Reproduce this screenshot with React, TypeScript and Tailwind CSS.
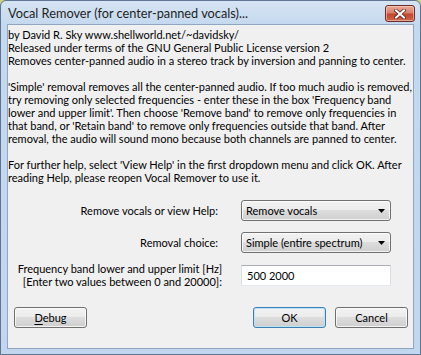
const font = { fontFamily: '"Lato", "Liberation Sans", sans-serif' };

function Combo({ value }: { value: string }) {
  return (
    <div className="flex h-[21px] w-[150px] items-center justify-between rounded-[3px] border border-[#707070] bg-[linear-gradient(#f2f2f2_0%,#ebebeb_50%,#dddddd_50%,#cfcfcf_100%)] pr-[5px] pl-[4px] shadow-[inset_0_0_0_1px_rgba(255,255,255,0.75)]">
      <span className="whitespace-nowrap">{value}</span>
      <svg width="7" height="4" viewBox="0 0 7 4">
        <path d="M0 0h7L3.5 4z" fill="#000" />
      </svg>
    </div>
  );
}

function Button({ children, primary = false }: { children: React.ReactNode; primary?: boolean }) {
  return (
    <div
      className={`flex h-[21px] w-[73px] items-center justify-center rounded-[3px] border bg-[linear-gradient(#f2f2f2_0%,#ebebeb_50%,#dddddd_50%,#cfcfcf_100%)] ${
        primary
          ? "border-[#3c7fb1] shadow-[inset_0_0_0_1px_#b8e3f8]"
          : "border-[#707070] shadow-[inset_0_0_0_1px_rgba(255,255,255,0.75)]"
      }`}
    >
      {children}
    </div>
  );
}

const intro = [
  "by David R. Sky www.shellworld.net/~davidsky/",
  "Released under terms of the GNU General Public License version 2",
  "Removes center-panned audio in a stereo track by inversion and panning to center.",
];

const explain = [
  "'Simple' removal removes all the center-panned audio. If too much audio is removed,",
  "try removing only selected frequencies - enter these in the box 'Frequency band",
  "lower and upper limit'. Then choose 'Remove band' to remove only frequencies in",
  "that band, or 'Retain band' to remove only frequencies outside that band. After",
  "removal, the audio will sound mono because both channels are panned to center.",
];

const help = [
  "For further help, select 'View Help' in the first dropdown menu and click OK. After",
  "reading Help, please reopen Vocal Remover to use it.",
];

export default function App() {
  return (
    <div className="h-[355px] w-[421px] bg-[#cfd27a]" style={font}>
      <div className="flex h-[355px] w-[421px] flex-col rounded-t-[6px] border border-[#5d7593] bg-[linear-gradient(#d6e4f4_0px,#c4d8ee_24px,#c2d7ee_100%)]">
        {/* title bar */}
        <div className="flex h-[23px] items-start justify-between pl-[7px]">
          <span className="mt-[5px] text-[12.75px] leading-[15px] text-[#1e1e1e]">
            Vocal Remover (for center-panned vocals)...
          </span>
          <div className="mt-[4px] mr-[5px] flex h-[17px] w-[30px] items-center justify-center rounded-[3px] border border-[#6b2b24] bg-[linear-gradient(#e9a99a_0%,#d8806c_45%,#c0462c_55%,#d0664a_100%)] shadow-[inset_0_0_0_1px_rgba(255,220,210,0.55)]">
            <svg width="12" height="10" viewBox="0 0 12 10">
              <path d="M2 1.5l8 7M10 1.5l-8 7" stroke="#5a2a22" strokeWidth="3.6" strokeLinecap="square" />
              <path d="M2 1.5l8 7M10 1.5l-8 7" stroke="#ffffff" strokeWidth="2" strokeLinecap="square" />
            </svg>
          </div>
        </div>

        {/* client area */}
        <div className="mx-[6px] h-[325px] border border-[#8ea6c2] bg-[#f0f0f0] text-[11px] leading-[13px] text-black">
          <div className="pt-[3px]">
            {intro.map((l) => (
              <div key={l} className="h-[13px] whitespace-nowrap">{l}</div>
            ))}
            <div className="h-[13px]" />
            {explain.map((l) => (
              <div key={l} className="h-[13px] whitespace-nowrap">{l}</div>
            ))}
            <div className="h-[13px]" />
            {help.map((l) => (
              <div key={l} className="h-[13px] whitespace-nowrap">{l}</div>
            ))}
          </div>

          <div className="mt-[16px] flex items-center">
            <div className="w-[214px] pr-[4px] text-right whitespace-nowrap">Remove vocals or view Help:</div>
            <div className="ml-[19px]">
              <Combo value="Remove vocals" />
            </div>
          </div>

          <div className="mt-[11px] flex items-center">
            <div className="w-[214px] pr-[4px] text-right whitespace-nowrap">Removal choice:</div>
            <div className="ml-[19px]">
              <Combo value="Simple (entire spectrum)" />
            </div>
          </div>

          <div className="mt-[9px] flex items-center">
            <div className="w-[214px] text-right whitespace-nowrap">
              <div>Frequency band lower and upper limit [Hz]</div>
              <div>[Enter two values between 0 and 20000]:</div>
            </div>
            <div className="ml-[19px] flex h-[21px] w-[150px] items-center border border-[#e3e9ef] border-t-[#abadb3] border-l-[#dbdfe6] border-r-[#dbdfe6] bg-white pl-[5px]">
              500 2000
            </div>
          </div>

          <div className="mt-[19px] flex pr-[5px] pl-[6px]">
            <Button>
              <span>
                <span className="underline underline-offset-2">D</span>ebug
              </span>
            </Button>
            <div className="flex-1" />
            <Button primary>OK</Button>
            <div className="ml-[9px]">
              <Button>Cancel</Button>
            </div>
          </div>
        </div>
      </div>
    </div>
  );
}
